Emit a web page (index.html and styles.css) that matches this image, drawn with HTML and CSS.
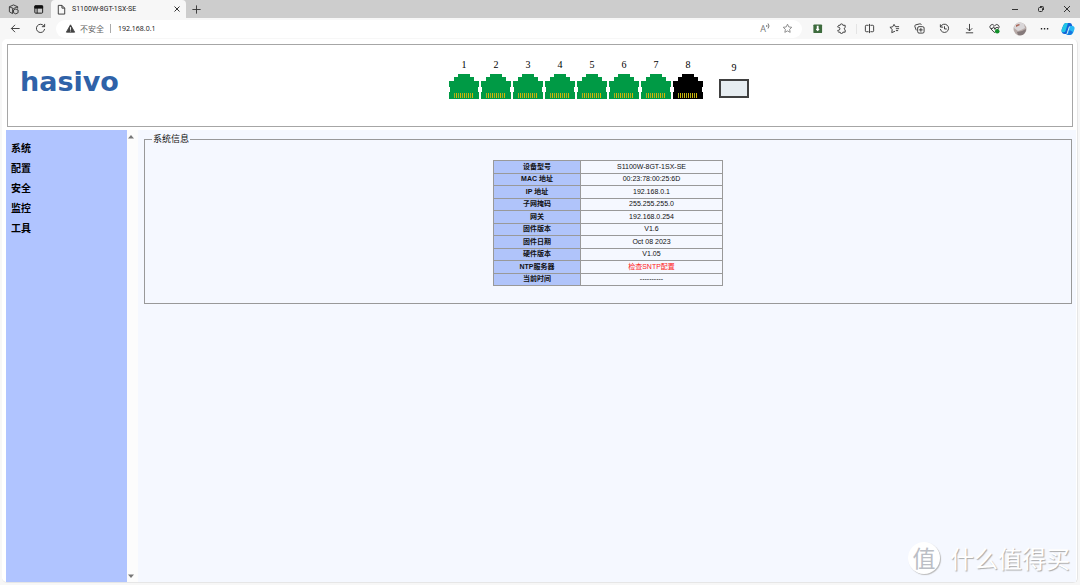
FILE: index.html
```html
<!DOCTYPE html>
<html lang="zh-CN">
<head>
<meta charset="utf-8">
<title>S1100W-8GT-1SX-SE</title>
<link rel="stylesheet" href="styles.css">
</head>
<body>
<svg class="defs" aria-hidden="true">
  <symbol id="port" viewBox="0 0 30 25">
    <path fill="currentColor" d="M9 0h12v3h4v4h5v6h-1v5h1v7H0v-7h1v-5H0V7h5V3h4z"/>
    <path stroke="#a8ae20" stroke-width="1" d="M5.500 19v5M9.500 19v5M13.500 19v5M17.500 19v5M21.500 19v5"/>
    <path stroke="#d8b400" stroke-width="1" d="M7.500 19v5M11.500 19v5M15.500 19v5M19.500 19v5M23.500 19v5"/>
  </symbol>
</svg>

<header class="tabs">
  <button class="icon-btn" aria-label="工作区"><svg class="ic" viewBox="0 0 12 12"><path d="M6 1 10.500 3v2M6 1 1.500 3v5.500L5 10.500M1.500 3 6 5l4.500-2M5 5v5.500M8.500 5.500l2.500 1v3l-2.500 1.300L6 9.500v-3z"/></svg></button>
  <button class="icon-btn" aria-label="标签操作"><svg class="ic dark" viewBox="0 0 12 12"><rect x="2" y="2" width="8.500" height="8" rx="1"/><path class="fill" d="M2 2h8.500v2.500H2z"/><path d="M4.500 4v6"/></svg></button>
  <div class="tab">
    <svg class="ic" viewBox="0 0 12 12"><path d="M2.500 1.500h4l3 3V11h-7zM6.500 1.500v3h3"/></svg>
    <span class="tab-title">S1100W-8GT-1SX-SE</span>
    <button class="close" aria-label="关闭标签"><svg class="ic small" viewBox="0 0 8 8"><path d="m1.500 1.500 5 5M6.500 1.500l-5 5"/></svg></button>
  </div>
  <button class="icon-btn plus" aria-label="新建标签"><svg class="ic" viewBox="0 0 12 12"><path d="M6 1.500v9M1.500 6h9"/></svg></button>
  <div class="window-controls">
    <button class="icon-btn" aria-label="最小化"><svg class="ic small" viewBox="0 0 8 8"><path d="M1 4.500h6"/></svg></button>
    <button class="icon-btn" aria-label="还原"><svg class="ic small" viewBox="0 0 8 8"><rect x="1.500" y="2.500" width="4" height="4" rx="1"/><path d="M3 1.500h2.500a1 1 0 0 1 1 1V5"/></svg></button>
    <button class="icon-btn" aria-label="关闭"><svg class="ic small" viewBox="0 0 8 8"><path d="m1 1 6 6M7 1 1 7"/></svg></button>
  </div>
</header>

<nav class="toolbar" aria-label="浏览器工具栏">
  <button class="icon-btn" aria-label="返回"><svg class="ic" viewBox="0 0 12 12"><path d="M10.500 6H1.500M5.500 2 1.500 6l4 4"/></svg></button>
  <button class="icon-btn" aria-label="刷新"><svg class="ic" viewBox="0 0 12 12"><path d="M10.500 6.500A4.500 4.500 0 1 1 9.500 3L10.500 4M10.500 1v3h-3"/></svg></button>
  <div class="address">
    <svg class="ic" viewBox="0 0 12 12"><path fill="#444" stroke="#444" stroke-linejoin="round" d="M6 2 10.500 10h-9z"/><path stroke="#fff" d="M6 4.500v3M6 8.300v.9"/></svg>
    <span class="insecure">不安全</span>
    <input class="url" aria-label="地址" value="192.168.0.1">
    <button class="icon-btn read" aria-label="朗读">A<svg class="waves" viewBox="0 0 4 7"><path d="M.5 2q1 1 0 2M2 .5q2 2.500 0 5"/></svg></button>
    <button class="icon-btn" aria-label="收藏"><svg class="ic pale" viewBox="0 0 12 12"><path d="m6 1.300 1.400 3 3.300.4-2.400 2.200.6 3.300L6 8.600l-2.900 1.600.6-3.300L1.300 4.700l3.300-.4z"/></svg></button>
  </div>
  <div class="tools">
    <button class="icon-btn" aria-label="下载扩展"><svg class="ic" viewBox="0 0 12 12"><rect x="1.500" y="1.500" width="9.500" height="9.500" rx="1" fill="#3d6b3d" stroke="none"/><path fill="#fff" stroke="none" d="M5.200 3h2v3l1 1-2 2-2-2 1-1z"/></svg></button>
    <button class="icon-btn ext" aria-label="扩展"><svg class="ic" viewBox="0 0 12 12"><path d="M3 2.500h1.500a1.500 1.500 0 0 1 3 0H10V5a1.300 1.300 0 0 0 0 2.500V10H7.500a1.500 1.500 0 0 1-3 0H3L2 9V8h.5a1.700 1.700 0 0 0 0-3.500H2v-1z"/></svg></button>
    <button class="icon-btn" aria-label="分屏"><svg class="ic" viewBox="0 0 12 12"><path d="M5 2.500H2.500a1 1 0 0 0-1 1v5a1 1 0 0 0 1 1H5M7 2.500h2.500a1 1 0 0 1 1 1v5a1 1 0 0 1-1 1H7M6 1v10"/></svg></button>
    <button class="icon-btn" aria-label="收藏夹"><svg class="ic" viewBox="0 0 12 12"><path d="M6.500 9 3 10.500l.5-3.500L1 4.700l3-.5 1.500-2.700L7 4h4M7.500 6.200H11M7.500 8.300H10"/></svg></button>
    <button class="icon-btn" aria-label="集锦"><svg class="ic" viewBox="0 0 12 12"><rect x="4" y="4" width="7" height="7" rx="1.500"/><path d="M2.500 8 1 4a1.500 1.500 0 0 1 1-2l4-1a1.500 1.500 0 0 1 2 1M7.500 5.500v4M5.500 7.500h4"/></svg></button>
    <button class="icon-btn" aria-label="历史记录"><svg class="ic" viewBox="0 0 12 12"><path d="M1.500 1.500v3h3M1.700 4.300A4.500 4.500 0 1 1 1.500 6.500M6 3.500v3h2.500"/></svg></button>
    <button class="icon-btn" aria-label="下载"><svg class="ic" viewBox="0 0 12 12"><path d="M6 1v7.500M3 5.700l3 3 3-3M2 10.700h8"/></svg></button>
    <button class="icon-btn" aria-label="浏览器健康"><svg class="ic" viewBox="0 0 12 12"><path d="M6 10.500 1.700 6a2.500 2.500 0 0 1 0-3.500 2.500 2.500 0 0 1 3.600 0L6 3.200l.7-.7a2.500 2.500 0 0 1 3.600 0 2.500 2.500 0 0 1 0 3.500zM2 6h2l1-2 1.500 3L7.500 5H10"/><circle cx="9" cy="9" r="2.500" fill="#12902a" stroke="none"/></svg></button>
    <button class="icon-btn" aria-label="个人资料"><svg class="avatar" viewBox="0 0 14 14"><circle cx="7" cy="7" r="6.500" fill="#b7aaa7"/><path fill="#d9d6d8" d="M1 6a6 6 0 0 1 10-4l1 4-4 2-3 1z"/><path fill="#857a7b" d="M4 10 9 9l4-2a6 6 0 0 1-8 6z"/><path fill="#aa6657" d="M3 3l3-1 1 1-4 2z"/></svg></button>
    <button class="icon-btn" aria-label="更多"><svg class="ic" viewBox="0 0 12 12"><path fill="#222" stroke="none" d="M2 5.500h1.500V7H2zM5.300 5.500h1.500V7H5.300zM8.600 5.500h1.500V7H8.600z"/></svg></button>
    <button class="icon-btn" aria-label="Copilot"><svg class="avatar" viewBox="0 0 14 14"><path fill="#1265d8" d="M5 1h4q1.500 0 2 2l.5 1.500H8L5.500 12H3.500Q1 12 .500 9q0-2 2-6Q3.500 1 5 1z"/><path fill="#20c5e5" d="M5 1h2L4.500 9Q4 11 .8 10 0 8 2.500 3 3.500 1 5 1z"/><path fill="#28b8f4" d="M9 4h2.500q2.500.3 2 3-1.500 6-4.500 6H5q1.500-.5 2-3z"/><path fill="#1876df" d="m8.500 8-1.500 4q-.5 1-2 1h4q2 0 3-3z"/></svg></button>
  </div>
</nav>

<div class="page">
  <header class="device">
    <div class="logo">hasivo</div>
    <div class="ports">
      <div class="port"><span>1</span><svg class="jack"><use href="#port"/></svg></div>
      <div class="port"><span>2</span><svg class="jack"><use href="#port"/></svg></div>
      <div class="port"><span>3</span><svg class="jack"><use href="#port"/></svg></div>
      <div class="port"><span>4</span><svg class="jack"><use href="#port"/></svg></div>
      <div class="port"><span>5</span><svg class="jack"><use href="#port"/></svg></div>
      <div class="port"><span>6</span><svg class="jack"><use href="#port"/></svg></div>
      <div class="port"><span>7</span><svg class="jack"><use href="#port"/></svg></div>
      <div class="port down"><span>8</span><svg class="jack"><use href="#port"/></svg></div>
      <div class="port fiber"><span>9</span><div class="slot"></div></div>
    </div>
  </header>
  <div class="body">
    <nav class="menu" aria-label="主菜单">
      <a href="#system">系统</a>
      <a href="#config">配置</a>
      <a href="#security">安全</a>
      <a href="#monitor">监控</a>
      <a href="#tools">工具</a>
    </nav>
    <div class="scroll" aria-hidden="true">
      <svg class="arrow" viewBox="0 0 6 4"><path d="M0 3.500 3 0l3 3.500z"/></svg>
      <svg class="arrow" viewBox="0 0 6 4"><path d="M0 .5 3 4 6 .5z"/></svg>
    </div>
    <main class="main">
      <fieldset class="info">
        <legend>系统信息</legend>
        <table class="facts">
          <tr><th scope="row">设备型号</th><td>S1100W-8GT-1SX-SE</td></tr>
          <tr><th scope="row">MAC 地址</th><td>00:23:78:00:25:6D</td></tr>
          <tr><th scope="row">IP 地址</th><td>192.168.0.1</td></tr>
          <tr><th scope="row">子网掩码</th><td>255.255.255.0</td></tr>
          <tr><th scope="row">网关</th><td>192.168.0.254</td></tr>
          <tr><th scope="row">固件版本</th><td>V1.6</td></tr>
          <tr><th scope="row">固件日期</th><td>Oct 08 2023</td></tr>
          <tr><th scope="row">硬件版本</th><td>V1.05</td></tr>
          <tr><th scope="row">NTP服务器</th><td class="warn">检查SNTP配置</td></tr>
          <tr><th scope="row">当前时间</th><td>----------</td></tr>
        </table>
      </fieldset>
    </main>
  </div>
</div>
<div class="watermark"><span class="badge">值</span><span>什么值得买</span></div>
</body>
</html>
```

FILE: styles.css
```css
* { box-sizing: border-box; }

body {
  margin: 0;
  height: 100vh;
  display: flex;
  flex-direction: column;
  background: #f7f7f7;
  color: #222;
  font-family: "Open Sans", "Noto Sans CJK SC", sans-serif;
  font-size: 7px;
  overflow: hidden;
}

.defs { position: absolute; width: 0; height: 0; }

button {
  border: 0;
  padding: 0;
  background: none;
  color: inherit;
  font: inherit;
}

.icon-btn {
  display: flex;
  align-items: center;
  justify-content: center;
  width: 25px;
  height: 18px;
  flex: none;
}

.ic {
  width: 11px;
  height: 11px;
  flex: none;
  fill: none;
  stroke: #333;
  stroke-width: 1;
}

.ic.small { width: 8px; height: 8px; }
.ic.pale { stroke: #888; }
.ic.dark { stroke: #111; }
.ic .fill { fill: #111; }

.avatar { width: 14px; height: 14px; }

.tabs {
  display: flex;
  align-items: center;
  height: 18px;
  flex: none;
  padding: 0 1px;
  background: #cdcdcd;
}

.tab {
  display: flex;
  align-items: center;
  gap: 5px;
  width: 135px;
  height: 18px;
  padding: 0 5px;
  background: #f7f7f7;
  border-radius: 4px 4px 0 0;
}

.tab-title { flex: 1; font-family: Roboto, sans-serif; white-space: nowrap; }
.close { display: flex; }
.plus { width: 20px; }

.window-controls {
  display: flex;
  gap: 1px;
  margin-left: auto;
}

.toolbar {
  display: flex;
  align-items: center;
  height: 21px;
  flex: none;
  padding: 0 1px 0 3px;
}

.address {
  display: flex;
  align-items: center;
  flex: 1;
  height: 18px;
  margin-left: 3px;
  padding: 0 2px 0 9px;
  background: #fff;
  border-radius: 9px;
}

.insecure {
  margin-left: 4px;
  padding-right: 6px;
  border-right: 1px solid #aaa;
  color: #666;
  font-size: 8px;
  line-height: 9px;
}

.url {
  flex: 1;
  min-width: 0;
  margin-left: 7px;
  padding: 0;
  border: 0;
  outline: 0;
  background: none;
  color: #111;
  font: inherit;
}

.read { width: 20px; color: #777; font-size: 9px; }
.waves { width: 4px; height: 7px; margin-bottom: 4px; fill: none; stroke: #777; }

.tools { display: flex; margin-left: 3px; }
.tools .ext { width: 27px; padding-right: 3px; border-right: 1px solid #e4e4e4; height: 10px; margin-top: 4px; }
.tools .icon-btn:last-child { width: 22px; }

.page {
  display: flex;
  flex: 1;
  flex-direction: column;
  min-height: 0;
  margin: 0 2px 2px;
  padding: 5px 1px 0 4px;
  background: #fff;
  border: 0 solid #e6e6e6;
  border-width: 0 1px 1px 0;
  border-radius: 5px;
}

.device {
  display: flex;
  flex: none;
  height: 83px;
  margin: 0 3px 3px 1px;
  border: 1px solid #a6a6a6;
}

.logo {
  width: 441px;
  padding: 20px 0 0 12px;
  color: #2f62a8;
  font: bold 27px/34px "DejaVu Sans", sans-serif;
}

.ports {
  display: flex;
  gap: 2px;
  padding-top: 13px;
  color: #000;
  font: 10px/14px "Liberation Serif", serif;
}

.port {
  display: flex;
  flex-direction: column;
  align-items: center;
  gap: 2px;
  color: #000;
}

.jack { width: 30px; height: 25px; color: #009a45; }
.down .jack { color: #000; }

.fiber { gap: 4px; margin: 3px 0 0 14px; }

.slot {
  width: 30px;
  height: 19px;
  background: #e7edf1;
  border: 2px solid #404040;
}

.body { display: flex; flex: 1; min-height: 0; }

.menu {
  display: flex;
  flex-direction: column;
  gap: 5px;
  width: 121px;
  flex: none;
  padding: 11px 5px;
  background: #b0c4ff;
}

.menu a {
  color: #000;
  font: bold 10px/15px "Liberation Sans", "Noto Sans CJK SC", sans-serif;
  text-decoration: none;
}

.scroll {
  display: flex;
  flex-direction: column;
  justify-content: space-between;
  width: 11px;
  flex: none;
  padding: 5px 0 4px 1px;
  background: #fcfcfc;
}

.arrow { width: 6px; height: 4px; fill: #777; }

.main {
  flex: 1;
  padding: 2px 4px 0 6px;
  background: #f5f8ff;
}

.info {
  margin: 0;
  padding: 14px 0 17px;
  border: 1px solid #999;
}

.info legend {
  margin-left: 7px;
  padding: 0 1px;
  color: #111;
  font: 9px/14px "Liberation Serif", "Noto Sans CJK SC", sans-serif;
}

.facts {
  width: 230px;
  height: 126px;
  margin: 0 auto;
  border-collapse: collapse;
  color: #111;
  font: 7px/10px "Liberation Sans", "Noto Sans CJK SC", sans-serif;
  text-align: center;
}

.facts th, .facts td {
  padding: 0;
  border: 1px solid #999;
}

.facts th { width: 87px; background: #b0c4fa; }
.facts .warn { color: #f22; }

.watermark {
  position: absolute;
  right: 10px;
  bottom: 10px;
  display: flex;
  align-items: center;
  gap: 10px;
  color: #fff;
  font: 24px/34px "Noto Sans CJK SC", sans-serif;
  text-shadow: 1px 1px 1px #aaa;
}

.badge {
  width: 32px;
  height: 32px;
  border-radius: 50%;
  background: #fff;
  box-shadow: 1px 1px 1px #bbb;
  color: #bbbec5;
  font-size: 23px;
  line-height: 31px;
  text-align: center;
  text-shadow: none;
}
```
